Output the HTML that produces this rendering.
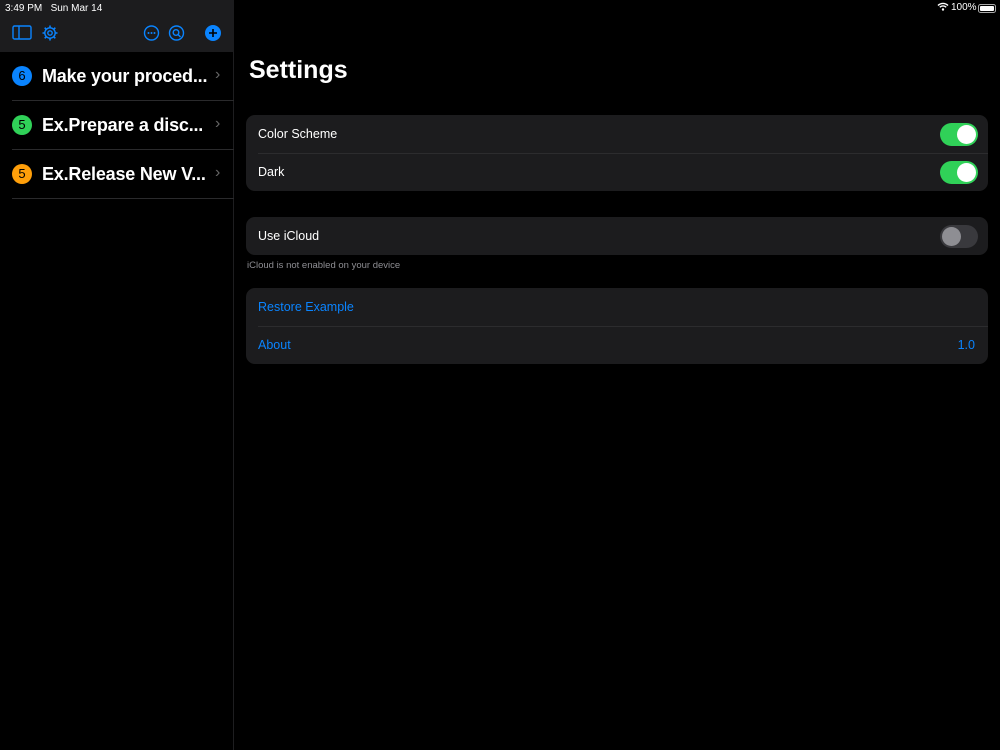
<!DOCTYPE html>
<html><head><meta charset="utf-8"><style>
*{margin:0;padding:0;box-sizing:border-box}
body{width:1000px;height:750px;background:#000;font-family:"Liberation Sans",sans-serif;color:#fff;position:relative;overflow:hidden}
.abs{position:absolute}
.side{left:0;top:0;width:234px;height:750px;background:#000;border-right:1px solid #1e1e20}
.hdr{left:0;top:0;width:234px;height:52px;background:#1c1c1e}
.st{font-size:10px;top:3px}
.row{left:12px;width:222px;height:49px;border-bottom:1px solid #2a2a2c}
.badge{position:absolute;left:0;top:14px;width:20px;height:20px;border-radius:50%;color:#000;font-size:13px;text-align:center;line-height:20px}
.rt{position:absolute;left:30px;top:14px;font-size:18px;font-weight:bold;color:#fff;letter-spacing:-0.2px}
.chev{position:absolute;left:203px;top:14px;color:#666;font-size:16px}
.card{left:246px;width:742px;background:#1c1c1e;border-radius:9px}
.cr{position:relative;height:38px;font-size:12.5px;line-height:39px;padding-left:12px}
.cr+.cr:before{content:"";position:absolute;left:12px;right:0;top:0;border-top:1px solid #2c2c2e}
.tg{position:absolute;right:10px;top:8px;width:38px;height:23px;border-radius:12px;background:#30d158}
.tg:after{content:"";position:absolute;right:2px;top:2px;width:19px;height:19px;border-radius:50%;background:#fff}
.tg.off{background:#39393d}
.tg.off:after{left:2px;right:auto;background:#8e8e93}
.blue{color:#0a84ff}
</style></head><body>
<div class="abs side"></div>
<div class="abs hdr"></div>
<div class="abs st" style="left:5px">3:49 PM&nbsp;&nbsp;&nbsp;Sun Mar 14</div>
<div class="abs st" style="left:937px;top:2px">
<svg width="12" height="9" viewBox="0 0 12 9" style="vertical-align:-1px"><path d="M1 3.5a7 7 0 0 1 10 0M2.8 5.3a4.5 4.5 0 0 1 6.4 0" stroke="#fff" stroke-width="1.4" fill="none"/><circle cx="6" cy="7.5" r="1.2" fill="#fff"/></svg></div>
<div class="abs st" style="left:951px;top:2px">100%</div>
<div class="abs" style="left:978px;top:4px;width:18px;height:9px;border:1px solid #aaa;border-radius:2.5px;padding:1px"><div style="background:#fff;width:100%;height:100%;border-radius:1px"></div></div>
<svg class="abs" style="left:12px;top:24px" width="215" height="18" viewBox="0 0 215 18">
<g stroke="#0a84ff" stroke-width="1.4" fill="none">
<rect x="1" y="2" width="18" height="13" rx="1.5"/><line x1="7" y1="2" x2="7" y2="15"/>
<circle cx="38" cy="9" r="5.2"/><circle cx="38" cy="9" r="2.2"/>
<circle cx="139.5" cy="9" r="7"/>
<circle cx="164.5" cy="9" r="7"/><circle cx="164" cy="8.5" r="2.8"/><line x1="166" y1="10.5" x2="168.5" y2="13"/>
</g>
<g fill="#0a84ff"><circle cx="136.5" cy="9" r="1"/><circle cx="139.5" cy="9" r="1"/><circle cx="142.5" cy="9" r="1"/><circle cx="201" cy="9" r="8"/></g>
<path d="M201 5v8M197 9h8" stroke="#000" stroke-width="1.6"/>
<path d="M38 1.5v2.5M38 14v2.5M30.5 9h2.5M43 9h2.5M32.7 3.7l1.7 1.7M41.6 12.6l1.7 1.7M32.7 14.3l1.7-1.7M41.6 5.4l1.7-1.7" stroke="#0a84ff" stroke-width="1.6"/>
</svg>
<div class="abs row" style="top:52px"><div class="badge" style="background:#0a84ff">6</div><div class="rt">Make your proced...</div><div class="chev">›</div></div>
<div class="abs row" style="top:101px"><div class="badge" style="background:#30d158">5</div><div class="rt">Ex.Prepare a disc...</div><div class="chev">›</div></div>
<div class="abs row" style="top:150px"><div class="badge" style="background:#ff9f0a">5</div><div class="rt">Ex.Release New V...</div><div class="chev">›</div></div>
<div class="abs" style="left:249px;top:56px;font-size:25px;font-weight:bold">Settings</div>
<div class="abs card" style="top:115px">
<div class="cr">Color Scheme<div class="tg"></div></div>
<div class="cr">Dark<div class="tg"></div></div>
</div>
<div class="abs card" style="top:217px">
<div class="cr">Use iCloud<div class="tg off"></div></div>
</div>
<div class="abs" style="left:247px;top:260px;font-size:9.5px;color:#8e8e93">iCloud is not enabled on your device</div>
<div class="abs card" style="top:288px">
<div class="cr blue">Restore Example</div>
<div class="cr blue">About<span style="position:absolute;right:13px">1.0</span></div>
</div>
</body></html>
